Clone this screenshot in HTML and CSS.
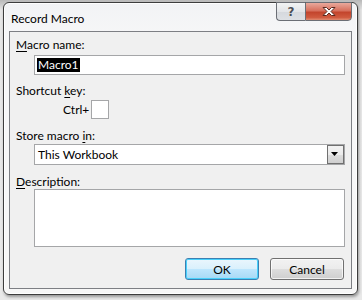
FILE: index.html
```html
<!DOCTYPE html>
<html>
<head>
<meta charset="utf-8">
<link rel="stylesheet" href="styles.css">
</head>
<body>
<div class="backdrop">
  <div class="window">
    <div class="titlebar">
      <div class="title">Record Macro</div>
      <div class="caption">
        <div class="cbtn help"><span>?</span></div>
        <div class="cbtn close">
          <svg width="16" height="11" viewBox="0 0 16 11"><path d="M2 1.5 L5.5 1.5 L8 4 L10.5 1.5 L14 1.5 L10 5.5 L14 9.5 L10.5 9.5 L8 7 L5.5 9.5 L2 9.5 L6 5.5 Z" fill="#fff" stroke="#5a2a20" stroke-width="1" stroke-linejoin="round"/></svg>
        </div>
      </div>
    </div>
    <div class="client">
      <div class="label"><u>M</u>acro name:</div>
      <div class="field name"><span class="sel">Macro1</span></div>
      <div class="label"><span>Shortcut <u>k</u>ey:</span></div>
      <div class="shortcut"><span>Ctrl+</span><div class="keybox"></div></div>
      <div class="label">Store macro <u>i</u>n:</div>
      <div class="field select"><span>This Workbook</span>
        <div class="drop"><svg width="9" height="5" viewBox="0 0 9 5"><path d="M0 0 H7 L3.5 4 Z" fill="#000"/></svg></div>
      </div>
      <div class="label"><u>D</u>escription:</div>
      <div class="field area"></div>
      <div class="buttons">
        <div class="btn ok">OK</div>
        <div class="btn">Cancel</div>
      </div>
    </div>
  </div>
</div>
</body>
</html>
```
FILE: styles.css
```css
html, body {
  margin: 0;
  padding: 0;
}
body {
  width: 362px;
  height: 300px;
  overflow: hidden;
  font-family: Lato, "Noto Sans", sans-serif;
  font-size: 12px;
  color: #000;
}
.backdrop {
  width: 362px;
  height: 300px;
  background: linear-gradient(#b9b9b9 0, #c9c9c9 4px, #e6e6e6 10px, #e9e9e9 100%);
  padding: 2px 0 0 3px;
  box-sizing: border-box;
}
.window {
  width: 355px;
  height: 293px;
  box-sizing: border-box;
  border: 1px solid #3d3d3d;
  border-radius: 6px;
  background: linear-gradient(#f2f3f5, #f7f7f8 40px, #f7f7f7);
  padding: 0 5px 5px 5px;
  box-shadow: 1px 2px 3px rgba(0,0,0,0.35), inset 0 0 0 1px rgba(255,255,255,0.9);
  display: flex;
  flex-direction: column;
}
.titlebar {
  height: 28px;
  display: flex;
  justify-content: space-between;
  align-items: flex-start;
}
.title {
  margin-top: 8px;
  margin-left: 2px;
  font-size: 12px;
  color: #000;
}
.caption {
  display: flex;
  margin-top: -1px;
}
.cbtn {
  height: 19px;
  box-sizing: border-box;
  border: 1px solid #6b6e75;
  display: flex;
  align-items: center;
  justify-content: center;
}
.help {
  width: 29px;
  border-radius: 0 0 0 4px;
  border-right: none;
  background: linear-gradient(#f2f3f4, #e3e5e8 50%, #d5d8dd 51%, #dde0e4);
  font-family: "DejaVu Sans", sans-serif;
  font-weight: bold;
  font-size: 12px;
}
.help span {
  color: #4b4f55;
  text-shadow: 0 0 1px #fff;
}
.close {
  width: 47px;
  border-radius: 0 0 4px 0;
  background: linear-gradient(#e9a99c, #d7705d 45%, #c3452d 55%, #d05a3f 85%, #e08d73);
}
.client {
  flex: 1;
  border: 1px solid #7d7f84;
  background: #f0f0f0;
  padding: 5px 6px 0 6px;
  display: flex;
  flex-direction: column;
}
.label {
  height: 15px;
  line-height: 15px;
  white-space: nowrap;
}
.label u { text-decoration: underline; text-underline-offset: 2px; }
.field {
  margin-left: 18px;
  width: 311px;
  box-sizing: border-box;
  border: 1px solid #a5a6a8;
  background: #fff;
  display: flex;
  align-items: center;
}
.name {
  height: 20px;
  margin-top: 3px;
  margin-bottom: 8px;
  padding-left: 2px;
}
.sel {
  background: #000;
  color: #fff;
  line-height: 14px;
  padding: 0 1px;
}
.shortcut {
  display: flex;
  align-items: center;
  margin-left: 47px;
  margin-top: 2px;
  height: 19px;
  gap: 2px;
}
.keybox {
  width: 18px;
  height: 19px;
  box-sizing: border-box;
  border: 1px solid #a5a6a8;
  background: #fff;
}
.shortcut + .label { margin-top: 9px; }
.select {
  height: 21px;
  margin-top: 1px;
  margin-bottom: 9px;
  padding-left: 3px;
  justify-content: space-between;
}
.drop {
  width: 17px;
  height: 19px;
  box-sizing: border-box;
  border: 1px solid #707070;
  background: linear-gradient(#f2f2f2, #ebebeb 50%, #dddddd 51%, #cfcfcf);
  display: flex;
  align-items: center;
  justify-content: center;
}
.area {
  height: 58px;
  margin-top: 0;
}
.buttons {
  display: flex;
  justify-content: flex-end;
  gap: 11px;
  margin-top: 11px;
  padding-right: 1px;
}
.btn {
  width: 74px;
  height: 22px;
  box-sizing: border-box;
  border: 1px solid #707070;
  border-radius: 3px;
  background: linear-gradient(#f2f2f2, #ebebeb 50%, #dddddd 51%, #cfcfcf);
  box-shadow: inset 0 0 0 1px rgba(255,255,255,0.7);
  display: flex;
  align-items: center;
  justify-content: center;
}
.ok {
  border-color: #3c7fb1;
  box-shadow: inset 0 0 0 1px #48d0fb;
  background: linear-gradient(#eaf6fd, #d9f0fc 50%, #bee6fd 51%, #a7d9f5);
}
```
